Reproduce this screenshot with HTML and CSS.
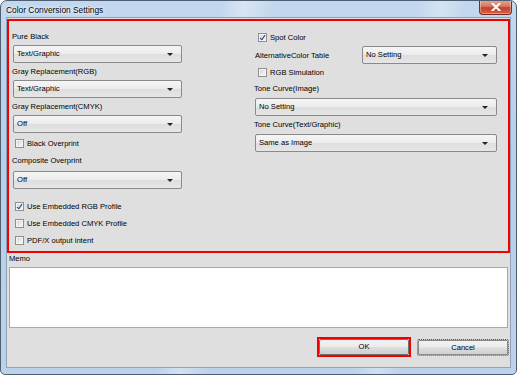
FILE: index.html
```html
<!DOCTYPE html>
<html lang="en">
<head>
    <meta charset="UTF-8">
    <title>Color Conversion Settings</title>
    <link rel="stylesheet" href="styles.css">
</head>
<body>
    <div class="window">
        <!-- Barra de titulo -->
        <div class="titlebar">
            <span class="title">Color Conversion Settings</span>
            <div class="close">
                <svg viewBox="0 0 10 8" width="10" height="8">
                    <path d="M1.5 0.5 L8.5 7.5 M8.5 0.5 L1.5 7.5" stroke="#fff" stroke-width="2" stroke-linecap="square"/>
                </svg>
            </div>
        </div>

        <div class="client">
            <div class="settings">
                <!-- Columna izquierda -->
                <div class="col">
                    <div class="label first">Pure Black</div>
                    <div class="select">Text/Graphic</div>
                    <div class="label">Gray Replacement(RGB)</div>
                    <div class="select">Text/Graphic</div>
                    <div class="label">Gray Replacement(CMYK)</div>
                    <div class="select">Off</div>
                    <div class="check check-after-select"><span class="box"></span>Black Overprint</div>
                    <div class="label label-after-check">Composite Overprint</div>
                    <div class="select select-loose">Off</div>
                    <div class="checks">
                        <div class="check"><span class="box checked"></span>Use Embedded RGB Profile</div>
                        <div class="check"><span class="box"></span>Use Embedded CMYK Profile</div>
                        <div class="check"><span class="box"></span>PDF/X output intent</div>
                    </div>
                </div>

                <!-- Columna derecha -->
                <div class="col right">
                    <div class="check first"><span class="box checked"></span>Spot Color</div>
                    <div class="inline-row">
                        <span>AlternativeColor Table</span>
                        <div class="select short">No Setting</div>
                    </div>
                    <div class="check check-tight"><span class="box"></span>RGB Simulation</div>
                    <div class="label label-after-check2">Tone Curve(Image)</div>
                    <div class="select select-gap3">No Setting</div>
                    <div class="label">Tone Curve(Text/Graphic)</div>
                    <div class="select select-gap3">Same as Image</div>
                </div>
            </div>

            <div class="memo-label">Memo</div>
            <div class="memo"></div>

            <div class="buttons">
                <div class="ok-ring"><div class="button ok">OK</div></div>
                <div class="button cancel">Cancel</div>
            </div>
        </div>
    </div>
</body>
</html>
```

FILE: styles.css
```css
/* Base */
body {
    margin: 0;
    padding: 0;
    background: #ffffff;
    font-family: "Liberation Sans", Arial, sans-serif;
}

.window {
    width: 517px;
    height: 375px;
    box-sizing: border-box;
    display: flex;
    flex-direction: column;
    padding: 0 5px 6px 5px;
    border: 1px solid #4f5f72;
    border-radius: 7px 7px 5px 5px;
    background:
        linear-gradient(100deg, transparent 0%, transparent 38%, rgba(255, 255, 255, 0.35) 42%, transparent 47%, transparent 72%, rgba(255, 255, 255, 0.3) 76%, transparent 80%),
        linear-gradient(180deg, #c3d8ee 0%, #b7cfe8 40%, #bcd2ea 100%);
    overflow: hidden;
}

/* Barra de titulo */
.titlebar {
    height: 16px;
    display: flex;
    align-items: flex-start;
}

.title {
    margin-top: 4px;
    font-size: 8.4px;
    line-height: 11px;
    color: #000;
    text-shadow: 0 0 4px #fff, 0 0 2px #fff;
}

.close {
    margin-left: auto;
    margin-right: -1px;
    margin-top: -1px;
    width: 33px;
    height: 15px;
    box-sizing: border-box;
    border: 1px solid #7a2b26;
    border-top: none;
    border-radius: 0 0 4px 4px;
    background: linear-gradient(180deg, #e9a99b 0%, #d6765f 45%, #c5422b 55%, #d2624a 100%);
    display: flex;
    justify-content: center;
    align-items: center;
    box-shadow: inset 0 0 0 1px rgba(255, 255, 255, 0.35);
}

/* Area de cliente */
.client {
    flex: 1;
    display: flex;
    flex-direction: column;
    padding-top: 1px;
    border: 1px solid #8ea2b8;
    background: #dfdfdf;
    font-size: 7.6px;
    color: #000;
}

.settings {
    display: grid;
    grid-template-columns: 169px 242px;
    column-gap: 73px;
    padding: 10px 11px 5px 4px;
    border: 2px solid #f00000;
}

.col {
    display: flex;
    flex-direction: column;
}

.label {
    height: 12px;
    line-height: 12px;
    margin-top: 3px;
    margin-left: -1px;
}

.label.first {
    margin-top: 0;
}

.label-after-check {
    margin-top: 6px;
}

.label-after-check2 {
    margin-top: 5px;
}

/* Combo */
.select {
    position: relative;
    height: 18px;
    line-height: 16px;
    margin-top: 2px;
    padding-left: 3px;
    box-sizing: border-box;
    border: 1px solid #8a8a8a;
    border-radius: 2px;
    background: linear-gradient(180deg, #f5f5f5 0%, #ececec 50%, #dedede 52%, #e6e6e6 100%);
}

.select::after {
    content: "";
    position: absolute;
    right: 8px;
    top: 7px;
    border-left: 3px solid transparent;
    border-right: 3px solid transparent;
    border-top: 3px solid #222;
}

.select-loose {
    margin-top: 4px;
}

.select-gap3 {
    margin-top: 3px;
}

.select.short {
    width: 135px;
    margin-top: 0;
}

.inline-row {
    display: flex;
    align-items: center;
    justify-content: space-between;
    margin-top: 3px;
}

/* Casillas */
.check {
    display: flex;
    align-items: center;
    height: 12px;
    margin-left: 2px;
}

.right .check {
    margin-left: 3px;
}

.check-after-select {
    margin-top: 4px;
}

.check-tight {
    margin-top: 2px;
}

.checks {
    display: flex;
    flex-direction: column;
    gap: 5px;
    margin-top: 11px;
}

.box {
    position: relative;
    width: 9px;
    height: 9px;
    margin-right: 3px;
    box-sizing: border-box;
    border: 1px solid #8e8f8f;
    background: linear-gradient(135deg, #cfcfcf 0%, #ececec 60%, #f6f6f6 100%);
    box-shadow: inset 0 0 0 1px #f4f4f4;
}

.box.checked::after {
    content: "";
    position: absolute;
    left: 2px;
    top: 0px;
    width: 2px;
    height: 5px;
    border-right: 1.5px solid #243c88;
    border-bottom: 1.5px solid #243c88;
    transform: rotate(35deg);
}

/* Memo */
.memo-label {
    height: 12px;
    line-height: 12px;
    padding-left: 2px;
}

.memo {
    height: 61px;
    margin: 2px 2px 0 2px;
    box-sizing: border-box;
    border: 1px solid #a9a9a9;
    background: #ffffff;
}

/* Botones */
.buttons {
    display: flex;
    justify-content: flex-end;
    align-items: center;
    gap: 6px;
    margin-top: 9px;
    padding-right: 1px;
}

.ok-ring {
    border: 2px solid #f00000;
    width: 94px;
    height: 20px;
    box-sizing: border-box;
}

.button {
    box-sizing: border-box;
    text-align: center;
    border: 1px solid #707070;
    border-radius: 2px;
    background: linear-gradient(180deg, #f2f2f2 0%, #ebebeb 48%, #dddddd 52%, #cfcfcf 100%);
}

.ok {
    height: 16px;
    line-height: 14px;
}

.cancel {
    width: 92px;
    height: 17px;
    line-height: 15px;
    border: 1px dotted #555;
    outline: 1px solid #8a8a8a;
    outline-offset: -2px;
}
```
